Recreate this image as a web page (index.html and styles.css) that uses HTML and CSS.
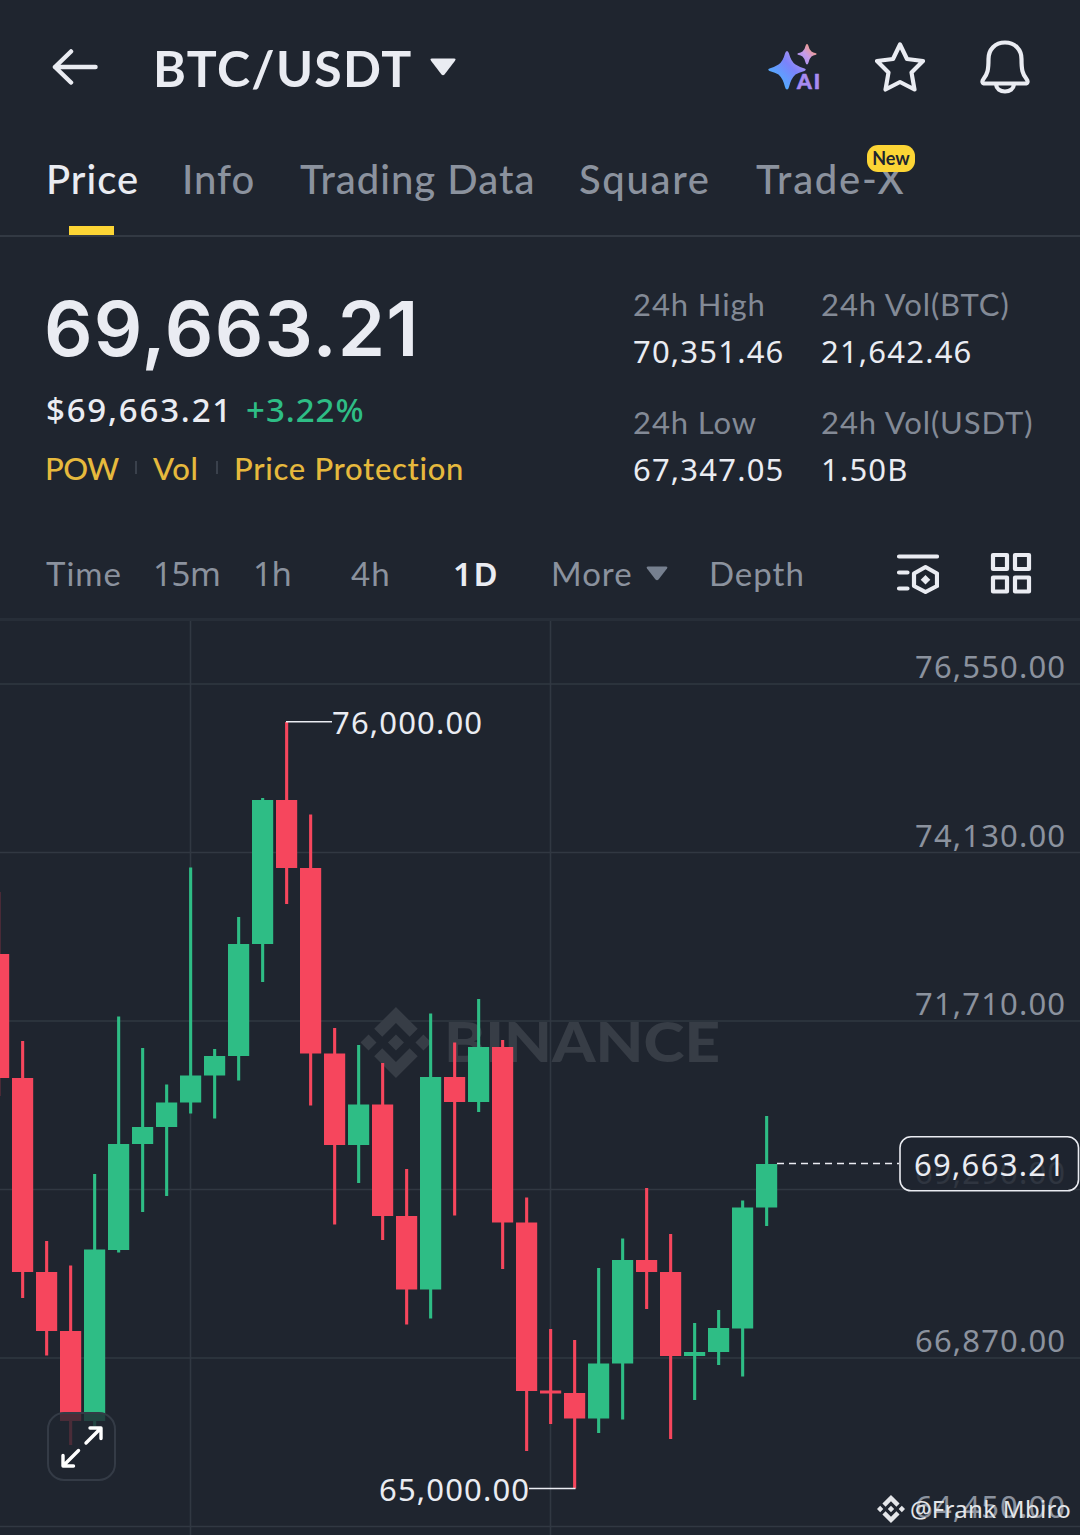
FILE: index.html
```html
<!DOCTYPE html>
<html lang="en">

<head>
    <meta charset="UTF-8">
    <meta name="viewport" content="width=device-width, initial-scale=1.0">
    <title>BTC/USDT</title>
    <link rel="stylesheet" href="styles.css">
</head>

<body>
    <!-- Shared logo shape -->
    <svg class="defs" width="0" height="0">
        <symbol id="logo" viewBox="0 0 24 24">
            <path d="M16.624 13.9202l2.7175 2.7154-7.353 7.353-7.353-7.352 2.7175-2.7164 4.6355 4.6595 4.6356-4.6595zm4.6366-4.6366L24 12l-2.7154 2.7164L18.5682 12l2.6924-2.7164zm-9.272.001l2.7163 2.6914-2.7164 2.7174v-.001L9.2721 12l2.7164-2.7154zm-9.2722-.001L5.4088 12l-2.6914 2.6924L0 12l2.7164-2.7164zM11.9885.0115l7.353 7.329-2.7174 2.7154-4.6356-4.6356-4.6355 4.6595-2.7174-2.7154 7.353-7.353z" />
        </symbol>
    </svg>

    <!-- Header -->
    <header class="header">
        <svg class="icon-back" width="46" height="36" viewBox="0 0 46 36">
            <path d="M19 2.500L3 18l16 15.500M3 18h40.500" />
        </svg>
        <h1 class="pair">BTC/USDT</h1>
        <svg class="pair-caret" width="26" height="18" viewBox="0 0 26 18">
            <path d="M2 .5h22q2.500 0 1 2.200L14.500 16.500q-1.500 1.500-3 0L1 2.700Q-.5.5 2 .5z" />
        </svg>
        <div class="header-icons">
            <svg class="icon-ai" width="54" height="48" viewBox="0 0 54 48">
                <defs>
                    <linearGradient id="ai" gradientUnits="userSpaceOnUse" x1="6" y1="44" x2="48" y2="4">
                        <stop offset="0" stop-color="#45b8ff" />
                        <stop offset=".45" stop-color="#7b83fb" />
                        <stop offset=".78" stop-color="#c79be8" />
                        <stop offset="1" stop-color="#ff9c6b" />
                    </linearGradient>
                </defs>
                <path fill="url(#ai)" d="M19 8q1.300 0 2 2.500 2 8 6.500 11 3 2 9 4 2.500 1.200 0 2.400-6 1.600-9 3.600-4.500 4-6.500 12.500-.7 2.500-2 2.500t-2-2.500q-2-8.500-6.500-12.500-3-2-9-3.600-2.500-1.200 0-2.400 6-2 9-4 4.500-3 6.500-11 .7-2.500 2-2.500z" />
                <path fill="url(#ai)" d="M39 1q1 0 1.500 2 .8 4 3 5.500 1.500 1 4.500 1.700 1.500.8 0 1.600-3 .7-4.500 1.700-2.200 2-3 6-.5 2-1.500 2t-1.500-2q-.8-4-3-6-1.500-1-4.500-1.700-1.500-.8 0-1.600 3-.7 4.500-1.700 2.200-1.500 3-5.500.5-2 1.500-2z" />
                <text class="ai-text" x="29" y="46" textLength="23">AI</text>
            </svg>
            <svg class="icon-line" width="52" height="52" viewBox="0 0 52 52">
                <path d="M25 3.500l7 14.500 16 2L36.500 31.500 39.500 48.500 25 41 10.500 48.500 13.500 31.500 2 20 18 18z" />
            </svg>
            <svg class="icon-line" width="50" height="54" viewBox="0 0 50 54">
                <path d="M25 2.500c10 0 16.500 7 16.500 16.500 0 11 1 15 5 20 2 2.500 1 4.500-1.500 4.500H5c-2.500 0-3.500-2-1.500-4.500 4-5 5-9 5-20C8.500 9.500 15 2.500 25 2.500zM16 44.500c.5 4 4 7 9 7s8.500-3 9-7" />
            </svg>
        </div>
    </header>

    <!-- Tabs -->
    <nav class="tabs">
        <a class="tab active">Price</a>
        <a class="tab">Info</a>
        <a class="tab">Trading Data</a>
        <a class="tab wide">Square</a>
        <a class="tab wide">Trade-X<span class="badge">New</span></a>
    </nav>

    <!-- Ticker -->
    <section class="ticker">
        <div class="price">
            <div class="last">69,663.21</div>
            <div class="sub"><span class="fiat">$69,663.21</span><span class="change">+3.22%</span></div>
            <div class="tags"><span class="pow">POW</span><i></i><span class="vol">Vol</span><i></i><span class="protection">Price Protection</span></div>
        </div>
        <dl class="stats">
            <div>
                <dt>24h High</dt>
                <dd>70,351.46</dd>
            </div>
            <div>
                <dt>24h Vol(BTC)</dt>
                <dd>21,642.46</dd>
            </div>
            <div>
                <dt>24h Low</dt>
                <dd>67,347.05</dd>
            </div>
            <div>
                <dt>24h Vol(USDT)</dt>
                <dd>1.50B</dd>
            </div>
        </dl>
    </section>

    <!-- Timeframes -->
    <nav class="frames">
        <span>Time</span>
        <span class="num">15m</span>
        <span class="num">1h</span>
        <span>4h</span>
        <span class="num active">1D</span>
        <span class="more">More
            <svg width="22" height="15" viewBox="0 0 22 15">
                <path d="M2 .5h18q2 0 1 2l-8.500 11q-1.500 1.500-3 0L1 2.500q-1-2 1-2z" />
            </svg>
        </span>
        <span>Depth</span>
        <svg class="icon-line" width="44" height="42" viewBox="0 0 44 42">
            <path d="M4 4.500h38M4 20.500h8.500M4 36.500h8.500M30.500 15l11.500 6.500v12.500L30.500 40 19 34V21.500z" />
            <path class="dot" d="M30.500 23l4.800 4.800-4.800 4.800-4.800-4.800z" />
        </svg>
        <svg class="icon-line" width="42" height="42" viewBox="0 0 42 42">
            <path d="M3 3h14v14H3zM25 3h14v14H25zM3 25.500h14v14H3zM25 25.500h14v14H25z" />
        </svg>
    </nav>

    <!-- Chart, drawn in page units so that y runs from 618 to 1535 -->
    <main class="chart">
        <svg width="1080" height="917" viewBox="0 618 1080 917">
            <path class="grid" d="M0 684h1080M0 852.500h1080M0 1021h1080M0 1189.500h1080M0 1358h1080M0 1526.500h1080M190.500 621v914M550.500 621v914" />
            <g class="brand">
                <use href="#logo" x="360.500" y="1007" width="71" height="71" />
                <text x="444" y="1062" textLength="276" lengthAdjust="spacingAndGlyphs">BINANCE</text>
            </g>
            <g id="candles"></g>
            <g class="axis">
                <text x="915" y="678" textLength="150">76,550.00</text>
                <text x="915" y="847" textLength="150">74,130.00</text>
                <text x="915" y="1015" textLength="150">71,710.00</text>
                <text x="915" y="1184" textLength="150">69,290.00</text>
                <text x="915" y="1352" textLength="150">66,870.00</text>
                <text x="915" y="1518" textLength="150">64,450.00</text>
            </g>
            <g class="mark">
                <path d="M286 721.800h46M529 1488.500h46.500" />
                <path d="M777 1163.500h122" stroke-dasharray="7 5" />
                <text x="332" y="734" textLength="150">76,000.00</text>
                <text x="379" y="1501" textLength="150">65,000.00</text>
                <rect x="900" y="1136.800" width="178.500" height="54" rx="11" />
                <text x="914" y="1176" textLength="151">69,663.21</text>
            </g>
        </svg>
        <button class="expand">
            <svg width="42" height="42" viewBox="0 0 42 42">
                <path d="M25 17L39.500 2.500M29 2h11v10.500M17.500 24.500L3 39M2 29.500V40h10.500" />
            </svg>
        </button>
        <div class="credit">
            <svg width="28" height="28">
                <use href="#logo" width="28" height="28" />
            </svg>
            <span>@Frank Mbiro</span>
        </div>
    </main>

    <script>
        // Each candle: direction, high, body top, body bottom, low
        const candles = [
            ['down', 892, 954, 1078, 1096],
            ['down', 1041, 1078, 1272, 1298],
            ['down', 1241, 1272, 1331, 1355.5],
            ['down', 1265.5, 1331, 1421, 1445],
            ['up', 1174, 1249.5, 1421, 1426],
            ['up', 1016.5, 1144, 1250, 1252.5],
            ['up', 1048, 1127, 1144, 1212],
            ['up', 1084.5, 1102.5, 1127, 1196],
            ['up', 867.5, 1075.5, 1102.5, 1113.5],
            ['up', 1049, 1056, 1075.5, 1118.5],
            ['up', 917, 944, 1056, 1080.5],
            ['up', 798, 800, 944, 982],
            ['down', 722, 800, 868, 904],
            ['down', 814.5, 868, 1053.5, 1105.5],
            ['down', 1028, 1053.5, 1145, 1224.5],
            ['up', 1045, 1104.5, 1145, 1183],
            ['down', 1063, 1104.5, 1216, 1240],
            ['down', 1169, 1216, 1289.5, 1324.5],
            ['up', 1013.5, 1077, 1289.5, 1318.5],
            ['down', 1042.5, 1077, 1102, 1215.5],
            ['up', 999, 1047, 1102, 1112],
            ['down', 1040, 1047, 1222.5, 1269],
            ['down', 1197.5, 1222.5, 1391, 1451],
            ['down', 1329, 1390.5, 1393.5, 1424],
            ['down', 1340, 1393, 1418.5, 1488.5],
            ['up', 1268, 1363.5, 1418.5, 1433],
            ['up', 1238.5, 1260, 1363.5, 1419.5],
            ['down', 1188, 1260, 1272, 1309],
            ['down', 1234, 1272, 1356, 1439],
            ['up', 1323, 1352, 1356, 1400],
            ['up', 1310, 1328, 1352, 1365],
            ['up', 1200.5, 1207.5, 1328.5, 1376.5],
            ['up', 1116, 1164, 1207.5, 1226]
        ];

        let shapes = '';
        candles.forEach(function (candle, i) {
            const [type, high, top, bottom, low] = candle;
            const x = 24 * i - 1.5;
            shapes += `<g class="${type}">
                <rect class="wick" x="${x - 1.4}" y="${high}" width="3.1" height="${low - high}" />
                <rect x="${x - 10.5}" y="${top}" width="21.200" height="${bottom - top}" />
            </g>`;
        });
        document.getElementById('candles').innerHTML = shapes;
    </script>
</body>

</html>
```

FILE: styles.css
```css
/* Page */
body {
    margin: 0;
    width: 1080px;
    height: 1535px;
    overflow: hidden;
    background-color: #1f252f;
    color: #eaecf2;
    font-family: Lato, "Noto Sans", sans-serif;
    font-variant-ligatures: none;
}

.defs {
    display: block;
}

/* Header */
.header {
    display: flex;
    align-items: center;
    height: 134px;
    padding: 0 50px 0 52px;
}

.icon-back {
    fill: none;
    stroke: #eaecf2;
    stroke-width: 4.5;
    stroke-linecap: round;
    stroke-linejoin: round;
}

.pair {
    margin: 1px 0 0 55px;
    width: 278px;
    font-size: 50px;
    font-weight: 700;
    letter-spacing: 1.3px;
}

.pair-caret {
    margin-left: -1px;
    fill: #eaecf2;
}

.header-icons {
    display: flex;
    align-items: center;
    gap: 53px;
    margin-left: auto;
}

.icon-ai {
    overflow: visible;
}

.icon-line {
    fill: none;
    stroke: #eaecf2;
    stroke-width: 4.2;
    stroke-linecap: round;
    stroke-linejoin: round;
}

.ai-text {
    font-size: 21px;
    font-weight: 900;
    fill: #a88bf2;
    stroke: #a88bf2;
    stroke-width: 0.6;
}

/* Tabs */
.tabs {
    display: grid;
    grid-template-columns: 136px 118px 279px 177px 160px;
    height: 101px;
    padding-left: 46px;
    border-bottom: 2px solid #323943;
}

.tab {
    position: relative;
    justify-self: start;
    line-height: 90px;
    font-size: 40px;
    font-weight: 500;
    letter-spacing: 1px;
    color: #8b929e;
    white-space: nowrap;
}

.tab.wide {
    letter-spacing: 1.7px;
}

.tab.active {
    color: #eaecf2;
}

.tab.active::after {
    content: "";
    position: absolute;
    left: 23px;
    bottom: 0;
    width: 45px;
    height: 9px;
    background-color: #fcd535;
}

.badge {
    position: absolute;
    left: 111px;
    top: 11px;
    width: 48px;
    height: 27px;
    border-radius: 11px;
    background-color: #fcd535;
    color: #1f252f;
    font-size: 18px;
    font-weight: 700;
    line-height: 27px;
    letter-spacing: 0;
    text-align: center;
}

/* Ticker */
.ticker {
    display: flex;
    height: 289px;
    padding: 49px 0 0 46px;
    box-sizing: border-box;
}

.price {
    width: 587px;
}

.last {
    height: 86px;
    margin-left: -2px;
    line-height: 85px;
    font-family: Inter, sans-serif;
    font-size: 76px;
    font-weight: 600;
    letter-spacing: 1.2px;
}

.sub {
    display: flex;
    height: 58px;
    margin-top: 9px;
    line-height: 58px;
    font-family: "Noto Sans", sans-serif;
    font-size: 33px;
    font-weight: 500;
}

.fiat {
    width: 200px;
    letter-spacing: 1.8px;
}

.change {
    color: #2ebd85;
    letter-spacing: 1px;
}

.tags {
    display: flex;
    align-items: center;
    height: 57px;
    margin-left: -1px;
    font-size: 31px;
    font-weight: 500;
    color: #e6b93d;
}

.tags i {
    width: 2px;
    height: 13px;
    margin: 0 16px;
    background-color: #3a414c;
}

.pow {
    width: 74px;
    letter-spacing: -0.6px;
}

.vol {
    width: 47px;
    letter-spacing: 0.6px;
}

.protection {
    letter-spacing: 0.7px;
}

.stats {
    display: grid;
    grid-template-columns: 188px 240px;
    grid-auto-rows: 118px;
    margin: -5px 0 0;
}

.stats dt,
.stats dd {
    margin: 0;
    height: 47px;
    line-height: 47px;
    font-size: 31px;
    white-space: nowrap;
}

.stats dt {
    color: #838a96;
    letter-spacing: 0.9px;
}

.stats dd {
    font-family: "Noto Sans", sans-serif;
    letter-spacing: 1.2px;
}

/* Timeframes */
.frames {
    display: grid;
    grid-template-columns: 107px 100px 98px 102px 98px 158px 186px 95px 42px;
    align-items: center;
    height: 93px;
    padding-left: 46px;
    box-sizing: border-box;
    color: #8b929e;
    font-size: 33px;
    letter-spacing: 1px;
}

.frames .num {
    padding-top: 2px;
    font-family: "Noto Sans", sans-serif;
    letter-spacing: -0.4px;
}

.frames .active {
    color: #eaecf2;
    font-weight: 600;
    letter-spacing: 1.5px;
}

.more svg {
    margin: 0 0 5px 4px;
    fill: #76808f;
}

.icon-line .dot {
    fill: #eaecf2;
    stroke: none;
}

/* Chart */
.chart {
    position: relative;
    height: 914px;
    border-top: 3px solid #272e38;
    margin-top: -1px;
}

.chart > svg {
    display: block;
    margin-top: -3px;
}

.grid {
    fill: none;
    stroke: #313842;
    stroke-width: 1.6;
}

.brand {
    fill: #373d46;
    font-size: 56px;
    font-weight: 900;
}

.up {
    fill: #2ebd85;
}

.down {
    fill: #f6465d;
}

.axis,
.mark {
    font-family: "Noto Sans", sans-serif;
    font-size: 31px;
    fill: #8b929e;
}

.mark path {
    fill: none;
    stroke: #eaecf2;
    stroke-width: 1.6;
}

.mark text {
    fill: #eaecf2;
}

.mark rect {
    fill: #1f252f;
    fill-opacity: 0.85;
    stroke: #eaecf2;
    stroke-width: 1.6;
}

/* Button over the chart */
.expand {
    position: absolute;
    left: 47px;
    bottom: 54px;
    display: flex;
    align-items: center;
    justify-content: center;
    width: 69px;
    height: 69px;
    padding: 0;
    border: 2.5px solid #343b46;
    border-radius: 17px;
    background-color: rgba(31, 37, 47, 0.8);
}

.expand svg {
    fill: none;
    stroke: #fff;
    stroke-width: 3.4;
    stroke-linecap: round;
    stroke-linejoin: round;
}

/* Author credit over the chart */
.credit {
    position: absolute;
    right: 9px;
    bottom: 9px;
    display: flex;
    align-items: center;
    gap: 5px;
    color: #e4e6e9;
    fill: #e4e6e9;
    font-family: "Noto Sans", sans-serif;
    font-size: 24px;
    line-height: 34px;
    letter-spacing: 0.3px;
}
```
